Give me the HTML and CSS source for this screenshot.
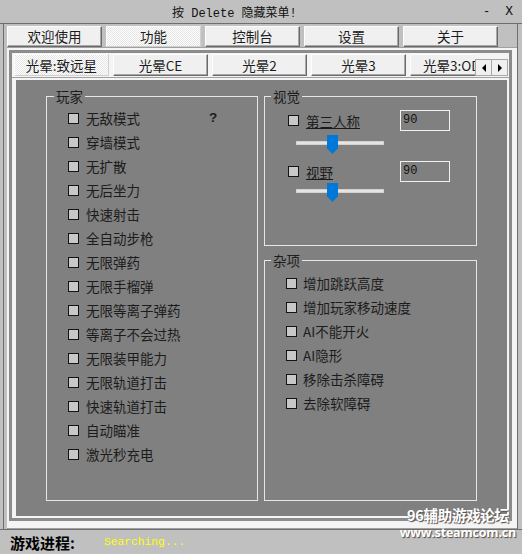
FILE: index.html
```html
<!DOCTYPE html>
<html>
<head>
	<meta charset="utf-8">
	<title>隐藏菜单</title>
	<link rel="stylesheet" href="styles.css">
</head>
<body>
<div class="window">
	<div class="titlebar">
		<span class="title">按 Delete 隐藏菜单!</span>
		<span class="winbtn">-</span>
		<span class="winbtn close">X</span>
	</div>

	<div class="client">
		<div class="maintabs">
			<div class="tab">欢迎使用</div>
			<div class="tab active">功能</div>
			<div class="tab">控制台</div>
			<div class="tab">设置</div>
			<div class="tab">关于</div>
		</div>

		<div class="page">
			<div class="frame">
				<div class="subtabs">
					<div class="strip">
						<div class="tab sub active">光晕:致远星</div>
						<div class="tab sub">光晕CE</div>
						<div class="tab sub">光晕2</div>
						<div class="tab sub">光晕3</div>
						<div class="tab sub">光晕3:ODST</div>
					</div>
					<div class="scroller">
						<span class="arrow"><i class="tri left"></i></span>
						<span class="arrow"><i class="tri right"></i></span>
					</div>
				</div>

				<div class="panel">
					<div class="board">
						<fieldset class="group players">
							<legend>玩家</legend>
							<div class="items">
								<div class="check"><span class="box"></span>无敌模式<span class="help">?</span></div>
								<div class="check"><span class="box"></span>穿墙模式</div>
								<div class="check"><span class="box"></span>无扩散</div>
								<div class="check"><span class="box"></span>无后坐力</div>
								<div class="check"><span class="box"></span>快速射击</div>
								<div class="check"><span class="box"></span>全自动步枪</div>
								<div class="check"><span class="box"></span>无限弹药</div>
								<div class="check"><span class="box"></span>无限手榴弹</div>
								<div class="check"><span class="box"></span>无限等离子弹药</div>
								<div class="check"><span class="box"></span>等离子不会过热</div>
								<div class="check"><span class="box"></span>无限装甲能力</div>
								<div class="check"><span class="box"></span>无限轨道打击</div>
								<div class="check"><span class="box"></span>快速轨道打击</div>
								<div class="check"><span class="box"></span>自动瞄准</div>
								<div class="check"><span class="box"></span>激光秒充电</div>
							</div>
						</fieldset>

						<fieldset class="group visual">
							<legend>视觉</legend>
							<div class="items">
								<div class="vrow first">
									<span class="box"></span><span class="link">第三人称</span>
									<div class="num">90</div>
								</div>
								<div class="slider s1"><div class="track"></div><div class="thumb"></div></div>
								<div class="vrow second">
									<span class="box"></span><span class="link">视野</span>
									<div class="num">90</div>
								</div>
								<div class="slider s2"><div class="track"></div><div class="thumb"></div></div>
							</div>
						</fieldset>

						<fieldset class="group misc">
							<legend>杂项</legend>
							<div class="items">
								<div class="check"><span class="box"></span>增加跳跃高度</div>
								<div class="check"><span class="box"></span>增加玩家移动速度</div>
								<div class="check"><span class="box"></span>AI不能开火</div>
								<div class="check"><span class="box"></span>AI隐形</div>
								<div class="check"><span class="box"></span>移除击杀障碍</div>
								<div class="check"><span class="box"></span>去除软障碍</div>
							</div>
						</fieldset>
					</div>
				</div>
			</div>
		</div>
	</div>

	<div class="status">
		<span class="status-label">游戏进程:</span>
		<span class="status-value">Searching...</span>
	</div>

	<div class="watermark">
		<div class="wm-name">96辅助游戏论坛</div>
		<div class="wm-url">www.steamcom.cn</div>
	</div>
</div>
</body>
</html>
```

FILE: styles.css
```css
*{
	box-sizing: border-box;
}
body{
	margin: 0;
	width: 522px;
	height: 554px;
	overflow: hidden;
	background-color: #c0c0c0;
	font-family: "Noto Sans CJK SC", "Noto Sans", sans-serif;
	font-size: 13.5px;
	color: #1c1c1c;
}
.window{
	position: relative;
	height: 554px;
}

/* barra de titulo */
.titlebar{
	height: 24px;
	border-bottom: 1px solid #6e6e6e;
	display: flex;
	align-items: center;
	font-family: "Liberation Mono", "Noto Sans CJK SC", monospace;
	font-size: 12px;
	color: #111;
}
.title{
	margin-left: 172px;
}
.winbtn{
	margin-left: auto;
}
.winbtn.close{
	margin-left: 15px;
	margin-right: 9px;
	font-size: 13px;
}

.client{
	margin-left: 3px;
	width: 515px;
	height: 505px;
	border-left: 1px solid #6e6e6e;
	border-right: 1px solid #6e6e6e;
}

/* pestañas */
.maintabs{
	display: flex;
	gap: 4px;
	padding: 2px 0 0 3px;
	height: 23px;
}
.tab{
	flex: none;
	width: 95px;
	height: 21px;
	line-height: 19px;
	text-align: center;
	background-color: #f0f0f0;
	border: 1px solid;
	border-color: #fdfdfd #6a6a6a #6a6a6a #fdfdfd;
	box-shadow: inset -1px -1px #a8a8a8;
	white-space: nowrap;
	overflow: hidden;
}
.tab.active{
	background: repeating-conic-gradient(#ffffff 0 25%, #e4e4e4 0 50%) 0 0/2px 2px;
	border-color: #fdfdfd #d0d0d0 #d0d0d0 #fdfdfd;
	box-shadow: none;
}
.tab.sub{
	height: 22px;
	line-height: 20px;
}
.strip .tab:last-child{
	text-align: left;
	padding-left: 12px;
}

.page{
	margin-left: 3px;
	width: 510px;
	height: 482px;
	background-color: #f4f4f4;
	border-top: 1px solid #a0a0a0;
	border-bottom: 1px solid #a0a0a0;
	padding: 2px 5px 7px 2px;
}
.frame{
	height: 471px;
	border: 3px solid #8c8c8c;
	padding: 1px 0 0 0;
}
.subtabs{
	display: flex;
	height: 22px;
	padding-left: 2px;
}
.strip{
	display: flex;
	gap: 4px;
	width: 461px;
	overflow: hidden;
}
.scroller{
	display: flex;
	align-self: flex-end;
	height: 17px;
}
.arrow{
	width: 17px;
	height: 17px;
	background-color: #f0f0f0;
	border: 1px solid #a8a8a8;
	display: flex;
	align-items: center;
	justify-content: center;
}
.arrow + .arrow{
	border-left: none;
	width: 16px;
}
.tri{
	width: 0;
	height: 0;
	border-top: 4px solid transparent;
	border-bottom: 4px solid transparent;
}
.tri.left{
	border-right: 4px solid #000;
}
.tri.right{
	border-left: 4px solid #000;
}

.panel{
	margin-top: 1px;
	height: 441px;
	border-top: 1px solid #a0a0a0;
	padding: 2px 2px 2px 4px;
}
.board{
	height: 436px;
	background-color: #808080;
	padding: 9px 0 0 30px;
	display: grid;
	grid-template-columns: 212px 213px;
	grid-template-rows: 157px 248px;
	column-gap: 6px;
	row-gap: 7px;
}

/* grupos */
.group{
	margin: 0;
	padding: 0;
	min-width: 0;
	border: 1px solid #e6e6e6;
}
.group legend{
	padding: 0 2px;
	margin-left: 6px;
	line-height: 14px;
	color: #1c1c1c;
}
.players legend{
	margin-left: 7px;
}
.players{
	grid-row: 1 / 3;
}
.players .items{
	padding: 3px 0 0 21px;
}
.misc .items{
	padding: 4px 0 0 21px;
}
.misc .box{
	margin-right: 6px;
}
.visual .items{
	padding: 0 26px 0 23px;
}

.check{
	display: flex;
	align-items: center;
	height: 24px;
	line-height: 14px;
	white-space: nowrap;
}
.box{
	flex: none;
	width: 11px;
	height: 11px;
	border: 1px solid #141414;
	background-color: #c8c8c8;
	margin-right: 7px;
}
.help{
	margin-left: 69px;
	font-weight: bold;
	font-family: "Liberation Sans", sans-serif;
}

.vrow{
	display: flex;
	align-items: center;
	height: 21px;
}
.vrow.first{
	margin-top: 7px;
}
.vrow.second{
	margin-top: 6px;
}
.link{
	text-decoration: underline;
	line-height: 14px;
}
.num{
	margin-left: auto;
	width: 50px;
	height: 21px;
	border: 1px solid #f2f2f2;
	padding-left: 2px;
	font-family: "Liberation Mono", monospace;
	font-size: 12px;
	line-height: 19px;
	color: #111;
}
.slider{
	position: relative;
	width: 88px;
	height: 20px;
	margin-left: 8px;
}
.slider.s1{
	margin-top: 4px;
}
.slider.s2{
	margin-top: 1px;
}
.track{
	position: absolute;
	left: 0;
	top: 6px;
	width: 88px;
	height: 4px;
	background-color: #e4e4e4;
	border: 1px solid #d2d2d2;
}
.thumb{
	position: absolute;
	left: 31px;
	top: 0;
	width: 11px;
	height: 19px;
	background-color: #0078d7;
	clip-path: polygon(0 0, 100% 0, 100% 70%, 50% 100%, 0 70%);
}

/* barra de estado */
.status{
	height: 25px;
	border-top: 1px solid #6e6e6e;
	display: flex;
	align-items: center;
	padding-left: 10px;
}
.status-label{
	font-size: 15px;
	font-weight: bold;
	color: #000;
}
.status-value{
	margin-left: 29px;
	font-family: "Liberation Mono", monospace;
	font-size: 11.3px;
	color: #ffff00;
}

.watermark{
	position: absolute;
	right: 6px;
	bottom: 15px;
	color: #fff;
	font-weight: bold;
	text-shadow: 1px 1px 1px #4a4a4a;
	text-align: center;
	line-height: 16px;
}
.wm-name{
	font-size: 14.5px;
	letter-spacing: -0.3px;
	margin-bottom: 3px;
}
.wm-url{
	font-family: "Open Sans", sans-serif;
	font-size: 12.5px;
	letter-spacing: -0.2px;
	line-height: 13px;
}
```
